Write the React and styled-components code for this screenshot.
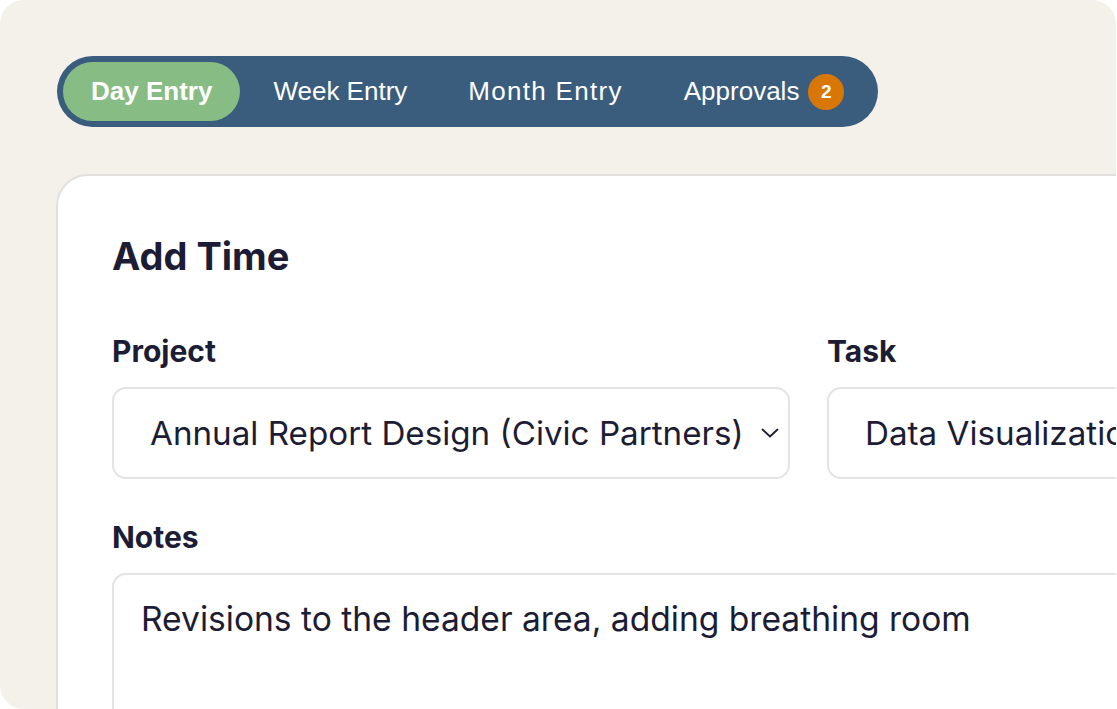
import React from 'react';
import styled, { createGlobalStyle } from 'styled-components';

const GlobalStyle = createGlobalStyle`
    body {
        margin: 0;
        background: #ffffff;
    }
`;

const tabs = [
    { label: 'Day Entry', active: true },
    { label: 'Week Entry' },
    { label: 'Month Entry', spacing: 1.3 },
    { label: 'Approvals', badge: 2 },
];

const Chevron = () => (
    <svg width="18" height="10" viewBox="0 0 18 10" fill="none">
        <path d="M1.5 1.5L9 8.5L16.5 1.5" stroke="#1d1e35" strokeWidth="1.8" strokeLinecap="round" strokeLinejoin="round" />
    </svg>
);

const App = () => {
    return (
        <>
            <GlobalStyle />
            <Frame>
                <TabBar>
                    {tabs.map(tab => (
                        <Tab key={tab.label} active={tab.active}>
                            <TabText spacing={tab.spacing}>{tab.label}</TabText>
                            {tab.badge && <Badge>{tab.badge}</Badge>}
                        </Tab>
                    ))}
                </TabBar>
                <Card>
                    <Title>Add Time</Title>
                    <Row>
                        <Field>
                            <Label>Project</Label>
                            <Select>
                                <span>Annual Report Design (Civic Partners)</span>
                                <Chevron />
                            </Select>
                        </Field>
                        <Field>
                            <Label>Task</Label>
                            <Select>
                                <span>Data Visualization</span>
                            </Select>
                        </Field>
                    </Row>
                    <Field>
                        <Label>Notes</Label>
                        <Notes>Revisions to the header area, adding breathing room</Notes>
                    </Field>
                </Card>
            </Frame>
        </>
    );
};

export default App;

const Frame = styled.div`
    width: 1116px;
    height: 709px;
    box-sizing: border-box;
    border-radius: 24px;
    background: #f4f1ea;
    overflow: hidden;
    padding: 56px 0 0 57px;
    display: flex;
    flex-direction: column;
    align-items: flex-start;
`;

const TabBar = styled.div`
    display: flex;
    gap: 5px;
    padding: 6px;
    background: #3a5d7e;
    border-radius: 999px;
`;

const Tab = styled.div`
    display: flex;
    align-items: center;
    gap: 9px;
    height: 59px;
    padding: 0 28px;
    border-radius: 999px;
    font-family: "Liberation Sans", Arial, sans-serif;
    font-size: 26px;
    font-weight: ${p => (p.active ? 700 : 400)};
    color: #ffffff;
    background: ${p => (p.active ? '#88bc85' : 'transparent')};
`;

const TabText = styled.span`
    letter-spacing: ${p => p.spacing || 0}px;
`;

const Badge = styled.span`
    display: flex;
    align-items: center;
    justify-content: center;
    width: 36px;
    height: 36px;
    border-radius: 50%;
    background: #d97706;
    font-size: 19px;
    font-weight: 700;
`;

const Card = styled.div`
    margin: 47px 0 0 -1px;
    width: 1400px;
    flex: 1;
    box-sizing: border-box;
    background: #ffffff;
    border: 2px solid #e2e0dc;
    border-radius: 32px 0 0 0;
    padding: 56px 0 0 54px;
    font-family: Inter, "Noto Sans", sans-serif;
    color: #1c1d35;
`;

const Title = styled.h2`
    margin: 0 0 54px;
    font-size: 38px;
    font-weight: 700;
    line-height: 48px;
`;

const Row = styled.div`
    display: grid;
    grid-template-columns: 678px 678px;
    column-gap: 37px;
    margin-bottom: 41px;
`;

const Field = styled.div`
    display: flex;
    flex-direction: column;
    gap: 19px;
`;

const Label = styled.div`
    font-size: 30px;
    font-weight: 700;
    line-height: 34px;
`;

const Select = styled.div`
    display: flex;
    align-items: center;
    justify-content: space-between;
    height: 92px;
    box-sizing: border-box;
    border: 2px solid #e4e4e4;
    border-radius: 14px;
    padding: 0 9px 0 36px;
    font-size: 33.2px;
    white-space: nowrap;
`;

const Notes = styled.div`
    width: 1200px;
    height: 160px;
    box-sizing: border-box;
    border: 2px solid #e4e4e4;
    border-radius: 14px;
    padding: 22px 27px;
    font-size: 33.6px;
    line-height: 44px;
`;
